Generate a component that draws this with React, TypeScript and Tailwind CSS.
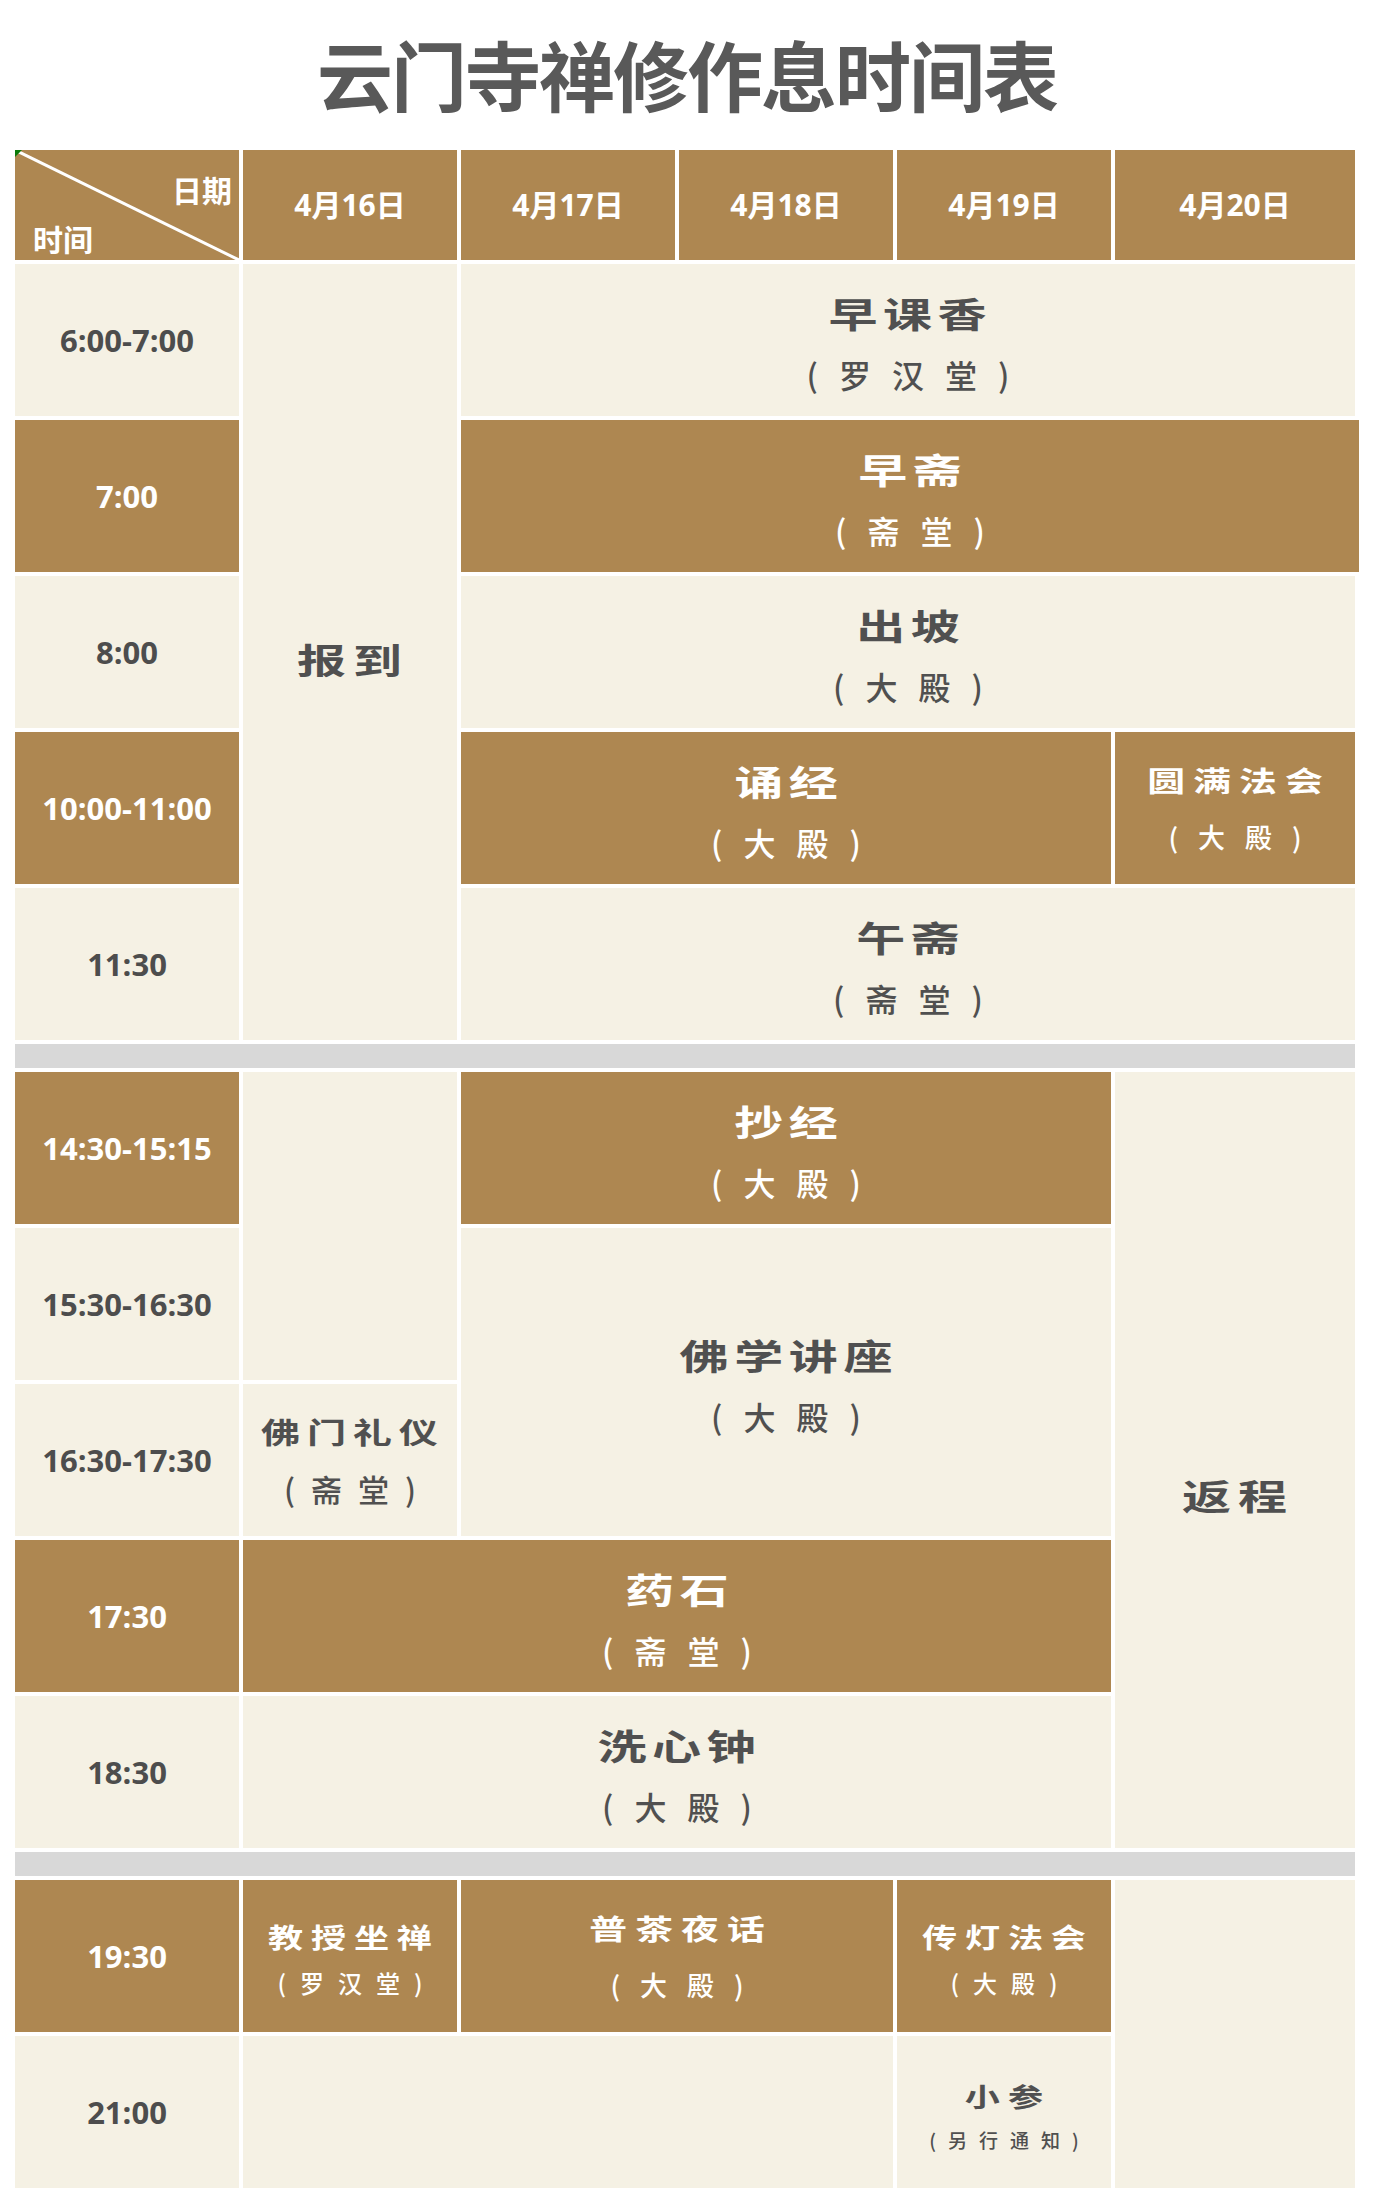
import React from "react";

const CJK = "font-['Noto_Sans_CJK_SC','Noto_Sans_CJK_JP',sans-serif]";
const NUM = "font-['Open_Sans','Noto_Sans_CJK_SC',sans-serif]";
const BROWN = "bg-[#ae8751] text-white";
const CREAM = "bg-[#f5f1e4] text-[#505050]";

type Tone = "b" | "c";
type Variant = "L" | "M" | "P" | "S" | "X";

const V: Record<Variant, { wrap: string; main: string; gap: string; sub: string }> = {
  L: {
    wrap: "pt-[4px]",
    main: "text-[35px] scale-x-140 tracking-[4px] pl-[4px]",
    gap: "mt-[28px]",
    sub: "text-[32px] tracking-[21px] pl-[21px]",
  },
  M: {
    wrap: "pt-[0px]",
    main: "text-[28px] scale-x-135 tracking-[6px] pl-[6px]",
    gap: "mt-[29px]",
    sub: "text-[27px] tracking-[20px] pl-[20px]",
  },
  P: {
    wrap: "pt-[0px]",
    main: "text-[29px] scale-x-135 tracking-[5px] pl-[5px]",
    gap: "mt-[27px]",
    sub: "text-[31px] tracking-[16px] pl-[16px]",
  },
  S: {
    wrap: "pt-[5px]",
    main: "text-[27px] scale-x-130 tracking-[6px] pl-[6px]",
    gap: "mt-[21px]",
    sub: "text-[24px] tracking-[14px] pl-[14px]",
  },
  X: {
    wrap: "pt-[8px]",
    main: "text-[26px] scale-x-135 tracking-[6px] pl-[6px]",
    gap: "mt-[21px]",
    sub: "text-[19px] tracking-[12px] pl-[12px]",
  },
};

function Act({
  cls,
  tone,
  v,
  main,
  sub,
}: {
  cls: string;
  tone: Tone;
  v: Variant;
  main?: string;
  sub?: string;
}) {
  const s = V[v];
  return (
    <div
      className={`flex flex-col items-center justify-center ${CJK} ${
        tone === "b" ? BROWN : CREAM
      } ${cls}`}
    >
      {main ? (
        <div className={`flex flex-col items-center ${s.wrap}`}>
          <div className="text-center leading-none">
            <span className={`inline-block font-bold leading-none whitespace-nowrap ${s.main}`}>
              {main}
            </span>
          </div>
          {sub ? (
            <div
              className={`text-center font-medium leading-none whitespace-nowrap ${s.gap} ${s.sub}`}
            >
              {sub}
            </div>
          ) : null}
        </div>
      ) : null}
    </div>
  );
}

function Big({ cls, text, pad }: { cls: string; text: string; pad: string }) {
  return (
    <div className={`flex items-center justify-center ${CJK} ${CREAM} ${cls}`}>
      <div className={`text-center leading-none ${pad}`}>
        <span className="inline-block scale-x-140 whitespace-nowrap pl-[5px] text-[35px] font-bold leading-none tracking-[5px]">
          {text}
        </span>
      </div>
    </div>
  );
}

function Time({ cls, tone, text }: { cls: string; tone: Tone; text: string }) {
  return (
    <div
      className={`col-start-1 flex items-center justify-center ${NUM} ${
        tone === "b" ? BROWN : "bg-[#f5f1e4] text-[#4d4d4d]"
      } ${cls}`}
    >
      <span className="text-[31px] font-bold leading-none">{text}</span>
    </div>
  );
}

function DateCell({ cls, text }: { cls: string; text: string }) {
  return (
    <div className={`row-start-1 flex items-center justify-center ${NUM} ${BROWN} ${cls}`}>
      <span className="text-[30px] font-bold leading-none">{text}</span>
    </div>
  );
}

export default function App() {
  return (
    <div className="min-h-[2203px] w-[1374px] bg-white">
      <div className="flex h-[150px] items-center justify-center pb-[4px]">
        <h1
          className={`${CJK} text-[76px] font-bold leading-none tracking-[-2px] text-[#595959]`}
        >
          云门寺禅修作息时间表
        </h1>
      </div>

      <div className="ml-[15px] grid w-[1340px] grid-cols-[224px_214px_214px_214px_214px_240px] grid-rows-[110px_repeat(5,152px)_24px_repeat(5,152px)_24px_repeat(2,152px)] gap-[4px]">
        {/* header corner */}
        <div className={`relative col-start-1 row-start-1 ${BROWN} ${CJK}`}>
          <svg
            className="absolute inset-0 h-full w-full"
            viewBox="0 0 224 110"
            preserveAspectRatio="none"
          >
            <line x1="0" y1="0" x2="224" y2="110" stroke="#ffffff" strokeWidth="3" />
            <polygon points="0,0 7,0 0,7" fill="#0a7a0a" />
          </svg>
          <span className="absolute right-[7px] top-[24px] text-[30px] font-bold leading-none">
            日期
          </span>
          <span className="absolute left-[18px] top-[73px] text-[30px] font-bold leading-none">
            时间
          </span>
        </div>
        <DateCell cls="col-start-2" text="4月16日" />
        <DateCell cls="col-start-3" text="4月17日" />
        <DateCell cls="col-start-4" text="4月18日" />
        <DateCell cls="col-start-5" text="4月19日" />
        <DateCell cls="col-start-6" text="4月20日" />

        {/* times */}
        <Time cls="row-start-2" tone="c" text="6:00-7:00" />
        <Time cls="row-start-3" tone="b" text="7:00" />
        <Time cls="row-start-4" tone="c" text="8:00" />
        <Time cls="row-start-5" tone="b" text="10:00-11:00" />
        <Time cls="row-start-6" tone="c" text="11:30" />
        <Time cls="row-start-8" tone="b" text="14:30-15:15" />
        <Time cls="row-start-9" tone="c" text="15:30-16:30" />
        <Time cls="row-start-10" tone="c" text="16:30-17:30" />
        <Time cls="row-start-11" tone="b" text="17:30" />
        <Time cls="row-start-12" tone="c" text="18:30" />
        <Time cls="row-start-14" tone="b" text="19:30" />
        <Time cls="row-start-15" tone="c" text="21:00" />

        {/* morning */}
        <Big cls="col-start-2 row-start-2 row-span-5" text="报到" pad="pt-[12px]" />
        <Act cls="col-start-3 col-span-4 row-start-2" tone="c" v="L" main="早课香" sub="(罗汉堂)" />
        <Act cls="col-start-3 col-span-4 row-start-3 -mr-[4px]" tone="b" v="L" main="早斋" sub="(斋堂)" />
        <Act cls="col-start-3 col-span-4 row-start-4" tone="c" v="L" main="出坡" sub="(大殿)" />
        <Act cls="col-start-3 col-span-3 row-start-5" tone="b" v="L" main="诵经" sub="(大殿)" />
        <Act cls="col-start-6 row-start-5" tone="b" v="M" main="圆满法会" sub="(大殿)" />
        <Act cls="col-start-3 col-span-4 row-start-6" tone="c" v="L" main="午斋" sub="(斋堂)" />

        <div className="col-start-1 col-span-6 row-start-7 bg-[#d8d8d8]" />

        {/* afternoon */}
        <div className={`col-start-2 row-start-8 row-span-2 ${CREAM}`} />
        <Act cls="col-start-3 col-span-3 row-start-8" tone="b" v="L" main="抄经" sub="(大殿)" />
        <Act cls="col-start-3 col-span-3 row-start-9 row-span-2" tone="c" v="L" main="佛学讲座" sub="(大殿)" />
        <Act cls="col-start-2 row-start-10" tone="c" v="P" main="佛门礼仪" sub="(斋堂)" />
        <Act cls="col-start-2 col-span-4 row-start-11" tone="b" v="L" main="药石" sub="(斋堂)" />
        <Act cls="col-start-2 col-span-4 row-start-12" tone="c" v="L" main="洗心钟" sub="(大殿)" />
        <Big cls="col-start-6 row-start-8 row-span-5" text="返程" pad="pt-[68px]" />

        <div className="col-start-1 col-span-6 row-start-13 bg-[#d8d8d8]" />

        {/* evening */}
        <Act cls="col-start-2 row-start-14" tone="b" v="S" main="教授坐禅" sub="(罗汉堂)" />
        <Act cls="col-start-3 col-span-2 row-start-14" tone="b" v="M" main="普茶夜话" sub="(大殿)" />
        <Act cls="col-start-5 row-start-14" tone="b" v="S" main="传灯法会" sub="(大殿)" />
        <div className={`col-start-6 row-start-14 row-span-2 ${CREAM}`} />
        <div className={`col-start-2 col-span-3 row-start-15 ${CREAM}`} />
        <Act cls="col-start-5 row-start-15" tone="c" v="X" main="小参" sub="(另行通知)" />
      </div>
    </div>
  );
}
